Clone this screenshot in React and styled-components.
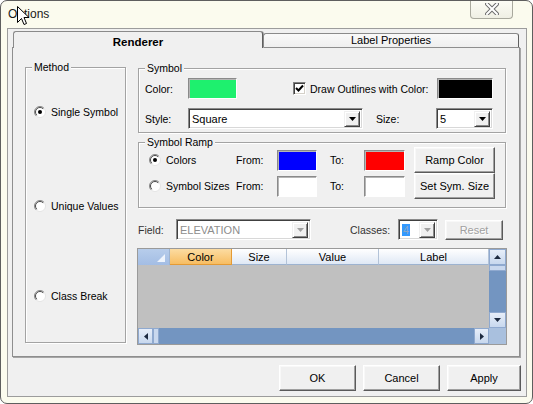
import React from 'react';
import styled, { createGlobalStyle } from 'styled-components';

const Global = createGlobalStyle`
  html, body { margin: 0; padding: 0; background: #ffffff; }
  body { font-family: "Liberation Sans", Arial, sans-serif; font-size: 10.5px; color: #000; }
  * { box-sizing: border-box; }
`;

const Window = styled.div`
  position: relative;
  width: 533px;
  height: 404px;
  border: 1px solid #5e5e5e;
  border-radius: 7px;
  background: #fbfbee;
  display: flex;
  flex-direction: column;
  overflow: hidden;
`;

const TitleBar = styled.div`
  position: relative;
  height: 27px;
  flex: none;
  padding: 6px 0 0 7px;
  font-size: 12px;
  line-height: 15px;
  color: #1a1a1a;
`;

const CloseBtn = styled.div`
  position: absolute;
  top: -1px;
  left: 469px;
  width: 43px;
  height: 19px;
  border: 1px solid #a9a99e;
  border-top: none;
  border-radius: 0 0 4px 4px;
  background: linear-gradient(#fdfdf6, #efefe4);
  display: flex;
  align-items: center;
  justify-content: center;
`;

const Cursor = styled.svg`
  position: absolute;
  left: 16px;
  top: 5px;
`;

const Client = styled.div`
  flex: 1;
  margin: 0 5px 6px 6px;
  border: 1px solid #9c9c9c;
  background: #f0f0f0;
  padding: 2px 0 0 4px;
  display: flex;
  flex-direction: column;
`;

const TabStrip = styled.div`
  display: flex;
  align-items: flex-end;
  height: 16px;
  margin-left: 1px;
  position: relative;
  z-index: 2;
`;

const Tab = styled.div`
  width: ${p => p.$w}px;
  height: ${p => (p.$active ? 17 : 14)}px;
  margin-bottom: ${p => (p.$active ? -1 : 0)}px;
  background: ${p => (p.$active ? '#f0f0f0' : 'linear-gradient(#f9f9f9, #efefef)')};
  border: 1px solid #8a8a8a;
  border-bottom: none;
  border-right: 1px solid #5f5f5f;
  box-shadow: ${p => (p.$active ? '1px 0 0 #a9a9a9' : 'none')};
  border-radius: 3px 3px 0 0;
  font-size: ${p => (p.$active ? 11.5 : 11)}px;
  font-weight: ${p => (p.$active ? 700 : 400)};
  text-align: center;
  line-height: ${p => (p.$active ? 16 : 13)}px;
  padding-top: ${p => (p.$active ? 2 : 0)}px;
`;

const Pane = styled.div`
  width: 508px;
  height: 310px;
  border: 1px solid #8e8e8e;
  box-shadow: 1px 1px 0 #a6a6a6;
  background: #f0f0f0;
  display: flex;
  gap: 11px;
  padding: 19px 0 0 12px;
  position: relative;
  z-index: 1;
`;

const Group = styled.div`
  position: relative;
  width: ${p => p.$w}px;
  height: ${p => p.$h}px;
  margin-top: ${p => p.$mt || 0}px;
  margin-left: ${p => p.$ml || 0}px;
  border: 1px solid #a3a3a3;
  box-shadow: inset 1px 1px 0 #ffffff, 1px 1px 0 #ffffff;
  flex: none;
`;

const Legend = styled.span`
  position: absolute;
  top: -7px;
  left: 6px;
  padding: 0 2px;
  background: #f0f0f0;
  line-height: 12px;
`;

const MethodList = styled.div`
  display: flex;
  flex-direction: column;
  padding-left: 8px;
`;

const RadioItem = styled.label`
  display: flex;
  align-items: center;
  gap: ${p => p.$gap || 5}px;
  height: 14px;
  margin-top: ${p => p.$mt || 0}px;
  width: ${p => (p.$w ? p.$w + 'px' : 'auto')};
  flex: none;
  white-space: nowrap;
`;

const RightCol = styled.div`
  width: 370px;
  display: flex;
  flex-direction: column;
`;

const Row = styled.div`
  display: flex;
  align-items: center;
  height: ${p => p.$h || 21}px;
  margin-top: ${p => p.$mt || 0}px;
  padding: 0 ${p => p.$pr || 0}px 0 ${p => p.$pl || 0}px;
  flex: none;
`;

const Label = styled.span`
  flex: none;
  width: ${p => (p.$w ? p.$w + 'px' : 'auto')};
  margin-left: ${p => p.$ml || 0}px;
  padding-left: ${p => p.$pl || 0}px;
  color: ${p => p.$c || '#000'};
  white-space: nowrap;
`;

const Swatch = styled.div`
  flex: none;
  width: ${p => p.$w}px;
  height: 21px;
  margin-left: ${p => (p.$ml === 'auto' ? 'auto' : (p.$ml || 0) + 'px')};
  background: ${p => p.$c};
  border: 1px solid;
  border-color: #8a8a8a #ffffff #ffffff #8a8a8a;
  box-shadow: inset 1px 1px 0 #b5b5b5;
`;

const CheckBox = styled.span`
  flex: none;
  width: 13px;
  height: 13px;
  margin-left: ${p => p.$ml || 0}px;
  background: #fff;
  border: 1px solid;
  border-color: #808080 #ffffff #ffffff #808080;
  box-shadow: inset 1px 1px 0 #404040, inset -1px -1px 0 #d4d0c8;
  display: flex;
  align-items: center;
  justify-content: center;
`;

const Combo = styled.div`
  flex: none;
  width: ${p => p.$w}px;
  height: 21px;
  margin-left: ${p => (p.$ml === 'auto' ? 'auto' : (p.$ml || 0) + 'px')};
  background: #fff;
  border: 1px solid;
  border-color: #8a8a8a #ffffff #ffffff #8a8a8a;
  box-shadow: inset 1px 1px 0 #404040, inset -1px -1px 0 #d8d8d8;
  display: flex;
  align-items: center;
  padding: 2px 2px 2px 3px;
  font-size: 11px;
  color: ${p => (p.$disabled ? '#8d8d8d' : '#000')};
`;

const ComboText = styled.span`
  flex: 1;
  white-space: nowrap;
  overflow: hidden;
`;

const Selected = styled.span`
  background: #3399ff;
  color: #8aa6c8;
  padding: 0 1px;
  line-height: 14px;
`;

const DropBtn = styled.span`
  flex: none;
  width: 16px;
  height: 16px;
  background: #f0f0f0;
  border: 1px solid;
  border-color: #f0f0f0 #404040 #404040 #f0f0f0;
  box-shadow: inset 1px 1px 0 #ffffff, inset -1px -1px 0 #8a8a8a;
  display: flex;
  align-items: center;
  justify-content: center;
`;

const Button = styled.div`
  flex: none;
  width: ${p => p.$w}px;
  height: ${p => p.$h || 26}px;
  margin-left: ${p => p.$ml || 0}px;
  background: #f0f0f0;
  border: 1px solid;
  border-color: #ffffff #5a5a5a #5a5a5a #ffffff;
  box-shadow: inset -1px -1px 0 #a0a0a0, inset 1px 1px 0 #f8f8f8;
  display: flex;
  align-items: center;
  justify-content: center;
  font-size: 11px;
  color: ${p => (p.$disabled ? '#a0a0a0' : '#000')};
  text-shadow: ${p => (p.$disabled ? '1px 1px 0 #ffffff' : 'none')};
  white-space: nowrap;
`;

const Grid = styled.div`
  margin-top: 8px;
  width: 370px;
  height: 97px;
  border: 1px solid #9a9a9a;
  display: grid;
  grid-template-columns: 351px 17px;
  grid-template-rows: 16px 63px 16px;
  flex: none;
`;

const HeaderRow = styled.div`
  display: flex;
`;

const HeadCell = styled.div`
  flex: none;
  width: ${p => p.$w}px;
  height: 16px;
  display: flex;
  align-items: center;
  justify-content: center;
  font-size: 11px;
  border-right: 1px solid ${p => (p.$hot ? '#e49a34' : '#b3c3d8')};
  border-bottom: 1px solid ${p => (p.$hot ? '#e49a34' : '#9db3d0')};
  background: ${p =>
    p.$hot ? 'linear-gradient(#fcdca2, #f7bd62)' : 'linear-gradient(#ffffff, #dfe8f5)'};
`;

const CornerCell = styled.div`
  flex: none;
  width: 32px;
  height: 16px;
  background: linear-gradient(#b7cdeb, #a3bde4);
  border-right: 1px solid #9db3d0;
  display: flex;
  align-items: flex-end;
  justify-content: flex-end;
  padding: 0 4px 3px 0;
`;

const Body = styled.div`
  background: #c0c0c0;
`;

const VScroll = styled.div`
  grid-row: 1 / 3;
  grid-column: 2;
  background: #7395c1;
  display: flex;
  flex-direction: column;
`;

const HScroll = styled.div`
  background: #7395c1;
  display: flex;
`;

const ScrollCorner = styled.div`
  background: #a9c0de;
`;

const ScrollBtn = styled.div`
  flex: none;
  width: ${p => (p.$horiz ? 15 : 17)}px;
  height: 16px;
  background: linear-gradient(#e7eef9, #c8d8ee);
  border: 1px solid #8fa9cf;
  display: flex;
  align-items: center;
  justify-content: center;
  margin-top: ${p => (p.$push ? 'auto' : '0')};
  margin-left: ${p => (p.$pushX ? 'auto' : '0')};
`;

const Thumb = styled.div`
  flex: none;
  width: ${p => (p.$horiz ? '6px' : '17px')};
  height: ${p => (p.$horiz ? '16px' : '6px')};
  background: #c9d8ee;
  border: 1px solid #8fa9cf;
`;

const ButtonBar = styled.div`
  display: flex;
  justify-content: flex-end;
  gap: 7px;
  margin-top: 8px;
  padding-right: 5px;
`;

const Tri = ({ dir = 'down', color = '#000', size = 7 }) => {
  const h = Math.ceil(size / 2);
  const pts = {
    down: `0,0 ${size},0 ${size / 2},${h}`,
    up: `0,${h} ${size},${h} ${size / 2},0`,
    left: `${h},0 ${h},${size} 0,${size / 2}`,
    right: `0,0 0,${size} ${h},${size / 2}`,
  }[dir];
  const vert = dir === 'down' || dir === 'up';
  return (
    <svg width={vert ? size : h} height={vert ? h : size} viewBox={`0 0 ${vert ? size : h} ${vert ? h : size}`}>
      <polygon points={pts} fill={color} />
    </svg>
  );
};

const Radio = ({ checked }) => (
  <svg width="12" height="12" viewBox="0 0 12 12" style={{ flex: 'none' }}>
    <circle cx="6" cy="6" r="5.5" fill="#ffffff" stroke="#e4e4e4" />
    <path d="M2.1 9.9 A5.5 5.5 0 0 1 9.9 2.1" fill="none" stroke="#8a8a8a" strokeWidth="1" />
    <path d="M2.8 9.2 A4.5 4.5 0 0 1 9.2 2.8" fill="none" stroke="#4a4a4a" strokeWidth="1" />
    {checked && <circle cx="6" cy="6" r="2" fill="#000" />}
  </svg>
);

const ComboBox = ({ w, ml, disabled, children }) => (
  <Combo $w={w} $ml={ml} $disabled={disabled}>
    <ComboText>{children}</ComboText>
    <DropBtn>
      <Tri dir="down" color={disabled ? '#a0a0a0' : '#000'} />
    </DropBtn>
  </Combo>
);

export default function App() {
  return (
    <>
      <Global />
      <Window>
        <TitleBar>
          Options
          <CloseBtn>
            <svg width="14" height="12" viewBox="0 0 14 12">
              <path d="M2 1 L12 11 M12 1 L2 11" stroke="#6c6c6c" strokeWidth="4" strokeLinecap="square" />
              <path d="M2 1 L12 11 M12 1 L2 11" stroke="#ffffff" strokeWidth="2" strokeLinecap="square" />
            </svg>
          </CloseBtn>
          <Cursor width="13" height="21" viewBox="0 0 13 21">
            <path d="M0.5 0.5 L0.5 16.5 L4.5 12.5 L7 18.5 L9.5 17.5 L7 11.5 L12 11.5 Z" fill="#ffffff" stroke="#000" strokeWidth="1" />
          </Cursor>
        </TitleBar>
        <Client>
          <TabStrip>
            <Tab $active $w={250}>Renderer</Tab>
            <Tab $w={256}>Label Properties</Tab>
          </TabStrip>
          <Pane>
            <Group $w={101} $h={276}>
              <Legend>Method</Legend>
              <MethodList>
                <RadioItem $mt={37}><Radio checked />Single Symbol</RadioItem>
                <RadioItem $mt={80}><Radio />Unique Values</RadioItem>
                <RadioItem $mt={76}><Radio />Class Break</RadioItem>
              </MethodList>
            </Group>
            <RightCol>
              <Group $w={368} $h={65} $mt={1} $ml={1}>
                <Legend>Symbol</Legend>
                <Row $mt={9} $pl={6} $pr={12}>
                  <Label $w={43}>Color:</Label>
                  <Swatch $c="#1ef06e" $w={49} />
                  <CheckBox $ml={56}>
                    <svg width="9" height="9" viewBox="0 0 9 9">
                      <path d="M1 4 L3.5 6.5 L8 1.5" fill="none" stroke="#000" strokeWidth="2" />
                    </svg>
                  </CheckBox>
                  <Label $ml={4}>Draw Outlines with Color:</Label>
                  <Swatch $c="#000000" $w={56} $ml="auto" />
                </Row>
                <Row $mt={9} $pl={6} $pr={12}>
                  <Label $w={43}>Style:</Label>
                  <ComboBox w={175}>Square</ComboBox>
                  <Label $ml={13}>Size:</Label>
                  <ComboBox w={57} ml="auto">5</ComboBox>
                </Row>
              </Group>
              <Group $w={368} $h={66} $mt={9} $ml={1}>
                <Legend>Symbol Ramp</Legend>
                <Row $h={26} $mt={4} $pl={10}>
                  <RadioItem $w={87} $gap={5}><Radio checked />Colors</RadioItem>
                  <Label $w={41}>From:</Label>
                  <Swatch $c="#0000ff" $w={40} />
                  <Label $w={47} $pl={13}>To:</Label>
                  <Swatch $c="#ff0000" $w={41} />
                  <Button $w={81} $ml={9}>Ramp Color</Button>
                </Row>
                <Row $h={26} $pl={10}>
                  <RadioItem $w={87} $gap={5}><Radio />Symbol Sizes</RadioItem>
                  <Label $w={41}>From:</Label>
                  <Swatch $c="#ffffff" $w={40} />
                  <Label $w={47} $pl={13}>To:</Label>
                  <Swatch $c="#ffffff" $w={41} />
                  <Button $w={81} $ml={9}>Set Sym. Size</Button>
                </Row>
              </Group>
              <Row $mt={11}>
                <Label $w={39} $pl={1} $c="#333">Field:</Label>
                <ComboBox w={135} disabled>ELEVATION</ComboBox>
                <Label $w={48} $ml={39} $c="#333">Classes:</Label>
                <Combo $w={40} $disabled>
                  <ComboText><Selected>4</Selected></ComboText>
                  <DropBtn><Tri dir="down" color="#a0a0a0" /></DropBtn>
                </Combo>
                <Button $w={58} $h={20} $ml={7} $disabled>Reset</Button>
              </Row>
              <Grid>
                <HeaderRow>
                  <CornerCell>
                    <svg width="8" height="8" viewBox="0 0 8 8">
                      <polygon points="8,0 8,8 0,8" fill="#eef4fc" />
                    </svg>
                  </CornerCell>
                  <HeadCell $w={62} $hot>Color</HeadCell>
                  <HeadCell $w={55}>Size</HeadCell>
                  <HeadCell $w={92}>Value</HeadCell>
                  <HeadCell $w={110}>Label</HeadCell>
                </HeaderRow>
                <VScroll>
                  <ScrollBtn><Tri dir="up" color="#1d2a40" /></ScrollBtn>
                  <Thumb />
                  <ScrollBtn $push><Tri dir="down" color="#1d2a40" /></ScrollBtn>
                </VScroll>
                <Body />
                <HScroll>
                  <ScrollBtn $horiz><Tri dir="left" color="#1d2a40" /></ScrollBtn>
                  <Thumb $horiz />
                  <ScrollBtn $horiz $pushX><Tri dir="right" color="#1d2a40" /></ScrollBtn>
                </HScroll>
                <ScrollCorner />
              </Grid>
            </RightCol>
          </Pane>
          <ButtonBar>
            <Button $w={77}>OK</Button>
            <Button $w={77}>Cancel</Button>
            <Button $w={74}>Apply</Button>
          </ButtonBar>
        </Client>
      </Window>
    </>
  );
}
